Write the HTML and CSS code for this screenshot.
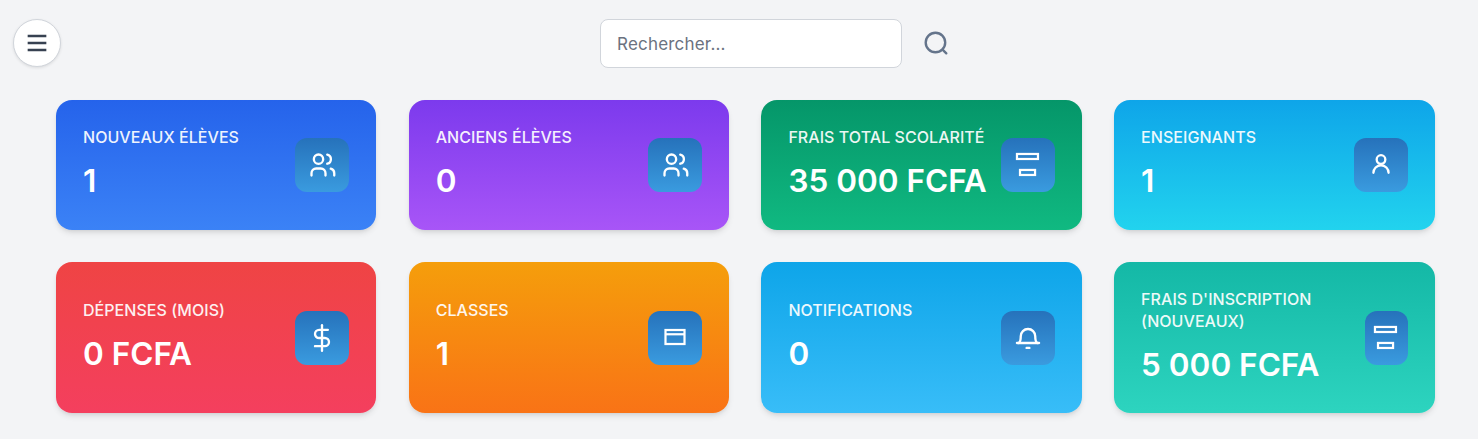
FILE: index.html
```html
<!DOCTYPE html>
<html lang="fr">
<head>
<meta charset="utf-8">
<title>Tableau de bord</title>
<link rel="stylesheet" href="styles.css">
</head>
<body>
<header class="topbar">
  <button class="menu-btn" aria-label="Menu">
    <svg viewBox="0 0 24 24" class="menu-icon"><path d="M4 6h16M4 12h16M4 18h16"/></svg>
  </button>
  <div class="search">
    <input class="search-input" type="text" placeholder="Rechercher...">
    <svg viewBox="0 0 24 24" class="search-icon"><circle cx="11.500" cy="11.500" r="9"/><path d="M18.500 18.500L21.500 21.500"/></svg>
  </div>
</header>
<main class="grid">
  <section class="card c-blue">
    <div class="info"><p class="label">NOUVEAUX ÉLÈVES</p><p class="value">1</p></div>
    <div class="badge"><svg viewBox="0 0 24 24" class="ico"><circle cx="9" cy="7" r="4"/><path d="M3 21v-2a4 4 0 0 1 4-4h4a4 4 0 0 1 4 4v2"/><path d="M16.500 3.100a4 4 0 0 1 0 7.800"/><path d="M22.500 21v-2a4 4 0 0 0-3-3.850"/></svg></div>
  </section>
  <section class="card c-violet">
    <div class="info"><p class="label">ANCIENS ÉLÈVES</p><p class="value">0</p></div>
    <div class="badge"><svg viewBox="0 0 24 24" class="ico"><circle cx="9" cy="7" r="4"/><path d="M3 21v-2a4 4 0 0 1 4-4h4a4 4 0 0 1 4 4v2"/><path d="M16.500 3.100a4 4 0 0 1 0 7.800"/><path d="M22.500 21v-2a4 4 0 0 0-3-3.850"/></svg></div>
  </section>
  <section class="card c-green">
    <div class="info"><p class="label">FRAIS TOTAL SCOLARITÉ</p><p class="value">35 000 FCFA</p></div>
    <div class="badge"><svg viewBox="0 0 24 24" class="ico sq"><rect x="2.550" y="2.550" width="18" height="4.300"/><rect x="5.150" y="16.250" width="12.900" height="4.300"/></svg></div>
  </section>
  <section class="card c-sky">
    <div class="info"><p class="label">ENSEIGNANTS</p><p class="value">1</p></div>
    <div class="badge"><svg viewBox="0 0 24 24" class="ico"><circle cx="12" cy="7.300" r="3.700"/><path d="M5.500 18.700a6.500 6.500 0 0 1 13 0"/></svg></div>
  </section>
  <section class="card c-red">
    <div class="info"><p class="label">DÉPENSES (MOIS)</p><p class="value">0 FCFA</p></div>
    <div class="badge"><svg viewBox="0 0 24 24" class="ico"><path d="M12 1v22"/><path d="M17 5H9.500a3.500 3.500 0 0 0 0 7h5a3.500 3.500 0 0 1 0 7H6"/></svg></div>
  </section>
  <section class="card c-orange">
    <div class="info"><p class="label">CLASSES</p><p class="value">1</p></div>
    <div class="badge"><svg viewBox="0 0 24 24" class="ico sq"><rect x="3.850" y="5.150" width="16.300" height="12"/><path d="M3.850 8.800h16.300"/></svg></div>
  </section>
  <section class="card c-cyan">
    <div class="info"><p class="label">NOTIFICATIONS</p><p class="value">0</p></div>
    <div class="badge"><svg viewBox="0 0 24 24" class="ico"><path d="M2.500 16.300h19"/><path d="M4 16.300c1.500-.8 1.800-2 1.800-5.800a6.200 6.200 0 0 1 12.400 0c0 3.800.3 5 1.800 5.800"/><path d="M10.800 20.500h2.400"/></svg></div>
  </section>
  <section class="card c-teal">
    <div class="info"><p class="label">FRAIS D'INSCRIPTION (NOUVEAUX)</p><p class="value">5 000 FCFA</p></div>
    <div class="badge"><svg viewBox="0 0 24 24" class="ico sq"><rect x="2.550" y="2.550" width="18" height="4.300"/><rect x="5.150" y="16.250" width="12.900" height="4.300"/></svg></div>
  </section>
</main>
</body>
</html>
```
FILE: styles.css
```css
* { box-sizing: border-box; }
html, body { margin: 0; padding: 0; }
body {
  background: #f3f4f6;
  font-family: "Inter", "Liberation Sans", sans-serif;
  height: 439px;
  overflow: hidden;
}
.topbar {
  display: flex;
  align-items: center;
  height: 48px;
  margin: 19px 0 33px 13px;
}
.menu-btn {
  width: 48px;
  height: 48px;
  padding: 0;
  border-radius: 50%;
  border: 1px solid #d1d5db;
  background: #fff;
  box-shadow: 0 1px 3px rgba(0,0,0,.1);
  display: flex;
  align-items: center;
  justify-content: center;
}
.menu-icon { width: 28px; height: 28px; fill: none; stroke: #374151; stroke-width: 2; }
.search { display: flex; align-items: center; gap: 21px; margin-left: 539px; }
.search-input {
  width: 302px;
  height: 49px;
  padding: 1px 16px 0;
  border: 1px solid #d1d5db;
  border-radius: 8px;
  background: #fff;
  font: 400 17px "Inter", sans-serif;
  letter-spacing: .2px;
  color: #111827;
}
.search-input::placeholder { color: #6b7280; opacity: 1; }
.search-icon { width: 26px; height: 26px; fill: none; stroke: #64748b; stroke-width: 2.200; stroke-linecap: round; }
.grid {
  display: grid;
  grid-template-columns: repeat(4, 1fr);
  grid-template-rows: 130px auto;
  gap: 32px 32.300px;
  margin: 0 43.500px 0 56px;
}
.card {
  display: flex;
  align-items: center;
  justify-content: space-between;
  padding: 25.500px 27px 27.500px;
  border-radius: 16px;
  box-shadow: 0 4px 6px -1px rgba(0,0,0,.1), 0 2px 4px -2px rgba(0,0,0,.1);
  color: #fff;
}
.label { margin: 0; font-size: 16px; line-height: 22px; font-weight: 500; letter-spacing: .05px; opacity: .92; }
.value { margin: 12px 0 0; font-size: 31.500px; line-height: 42px; font-weight: 600; }
.badge {
  width: 54px;
  height: 54px;
  margin-top: 2px;
  flex-shrink: 1.100;
  border-radius: 12px;
  background: linear-gradient(180deg, #2672bb, #3a9bdf);
  display: flex;
  align-items: center;
  justify-content: center;
}
.info { flex: 0 1 auto; }
.ico { width: 28px; height: 28px; fill: none; stroke: #fff; stroke-width: 2; stroke-linecap: round; stroke-linejoin: round; flex: none; }
.ico.sq { stroke-width: 1.900; stroke-linecap: butt; stroke-linejoin: miter; }
.c-blue { background: linear-gradient(180deg, #2563eb, #3b82f6); }
.c-violet { background: linear-gradient(180deg, #7c3aed, #a855f7); }
.c-green { background: linear-gradient(180deg, #059669, #10b981); }
.c-sky { background: linear-gradient(180deg, #0ea5e9, #22d3ee); }
.c-red { background: linear-gradient(180deg, #ef4444, #f43f5e); }
.c-orange { background: linear-gradient(180deg, #f59e0b, #f97316); }
.c-cyan { background: linear-gradient(180deg, #0ea5e9, #38bdf8); }
.c-teal { background: linear-gradient(180deg, #14b8a6, #2dd4bf); }
```
